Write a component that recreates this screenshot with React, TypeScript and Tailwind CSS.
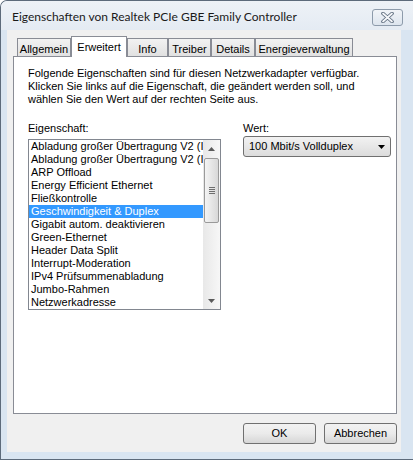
const tabs = [
  { label: "Allgemein", w: "w-[54px]" },
  { label: "Erweitert", w: "w-[56px]", active: true },
  { label: "Info", w: "w-[41px]" },
  { label: "Treiber", w: "w-[43px]" },
  { label: "Details", w: "w-[44px]" },
  { label: "Energieverwaltung", w: "w-[98px]" },
];

const items = [
  "Abladung großer Übertragung V2 (IPv4)",
  "Abladung großer Übertragung V2 (IPv6)",
  "ARP Offload",
  "Energy Efficient Ethernet",
  "Fließkontrolle",
  "Geschwindigkeit & Duplex",
  "Gigabit autom. deaktivieren",
  "Green-Ethernet",
  "Header Data Split",
  "Interrupt-Moderation",
  "IPv4 Prüfsummenabladung",
  "Jumbo-Rahmen",
  "Netzwerkadresse",
];

const selected = "Geschwindigkeit & Duplex";

function Arrow({ up }: { up?: boolean }) {
  return (
    <svg width="7" height="4" viewBox="0 0 7 4">
      <path d={up ? "M0 4 L3.5 0 L7 4 Z" : "M0 0 L7 0 L3.5 4 Z"} fill="#5a5a5a" />
    </svg>
  );
}

function Scrollbar() {
  return (
    <div className="w-[17px] flex flex-col bg-gradient-to-r from-[#e8e8e8] to-[#f7f7f7]">
      <div className="h-[17px] flex items-center justify-center">
        <Arrow up />
      </div>
      <div className="mx-[1px] mt-[1px] h-[65px] rounded-[2px] border border-[#9a9a9a] bg-gradient-to-r from-[#f4f4f4] via-[#e6e6e6] to-[#d8d8d8] flex flex-col items-center justify-center gap-[1px]">
        <div className="w-[6px] h-px bg-[#6e6e6e]" />
        <div className="w-[6px] h-px bg-[#6e6e6e]" />
        <div className="w-[6px] h-px bg-[#6e6e6e]" />
        <div className="w-[6px] h-px bg-[#6e6e6e]" />
      </div>
      <div className="flex-1" />
      <div className="h-[17px] flex items-center justify-center">
        <Arrow />
      </div>
    </div>
  );
}

export default function App() {
  return (
    <div
      className="w-[413px] h-[460px] bg-[#d9e5f1] rounded-tl-[7px] border-l border-t border-b border-[#5d6b7b] flex flex-col overflow-hidden text-[11px] text-black"
      style={{ fontFamily: '"Liberation Sans", Arial, sans-serif' }}
    >
      {/* Title bar */}
      <div className="h-[29px] flex justify-between bg-gradient-to-b from-[#eef2f7] to-[#e4ebf3]">
        <div
          className="pl-[11px] pt-[7px] text-[12px] text-[#1a1a1a]"
          style={{ fontFamily: 'Lato, "Noto Sans", sans-serif' }}
        >
          Eigenschaften von Realtek PCIe GBE Family Controller
        </div>
        <div className="mt-[8px] mr-[10px] w-[31px] h-[17px] rounded-[3px] border border-[#8d9bab] bg-gradient-to-b from-[#f1f4f8] to-[#dde5ee] flex items-center justify-center">
          <svg width="13" height="11" viewBox="0 0 13 11">
            <path d="M2 1.5 L11 9.5 M11 1.5 L2 9.5" stroke="#5b6a7c" strokeWidth="3.6" strokeLinecap="round" />
            <path d="M2 1.5 L11 9.5 M11 1.5 L2 9.5" stroke="#f4f6f9" strokeWidth="1.8" strokeLinecap="round" />
          </svg>
        </div>
      </div>

      {/* Client area */}
      <div className="ml-[6px] w-[394px] h-[422px] bg-[#f0f0f0] flex flex-col pl-[6px] pt-[6px]">
        {/* Tabs */}
        <div className="ml-[4px] h-[20px] flex items-end">
          {tabs.map((t) =>
            t.active ? (
              <div
                key={t.label}
                className={`${t.w} h-[21px] -mb-px relative z-10 bg-white border border-b-0 border-[#898c95] flex items-start justify-center pt-[2px]`}
              >
                {t.label}
              </div>
            ) : (
              <div
                key={t.label}
                className={`${t.w} h-[18px] bg-gradient-to-b from-[#f2f2f2] to-[#e1e1e1] border border-b-0 border-[#898c95] flex items-start justify-center pt-[2px]`}
              >
                {t.label}
              </div>
            )
          )}
        </div>

        {/* Panel */}
        <div className="w-[384px] h-[358px] bg-white border border-[#898c95] pl-[14px] pt-[10px]">
          <p className="leading-[13px]">
            Folgende Eigenschaften sind für diesen Netzwerkadapter verfügbar.
            <br />
            Klicken Sie links auf die Eigenschaft, die geändert werden soll, und
            <br />
            wählen Sie den Wert auf der rechten Seite aus.
          </p>

          <div className="mt-[16px] flex gap-[22px]">
            <div className="w-[193px]">
              <div className="leading-[13px]">Eigenschaft:</div>
              <div className="mt-[4px] h-[171px] border border-[#828790] flex">
                <div className="flex-1 overflow-hidden">
                  {items.map((it) => (
                    <div
                      key={it}
                      className={`h-[13px] leading-[13px] pl-[2px] whitespace-nowrap ${
                        it === selected ? "bg-[#3399ff] text-white" : ""
                      }`}
                    >
                      {it}
                    </div>
                  ))}
                </div>
                <Scrollbar />
              </div>
            </div>

            <div className="w-[148px]">
              <div className="leading-[13px]">Wert:</div>
              <div className="mt-[1px] h-[21px] rounded-[3px] border border-[#707070] bg-gradient-to-b from-[#f2f2f2] to-[#dcdcdc] flex items-center justify-between pl-[5px] pr-[5px]">
                <span>100 Mbit/s Vollduplex</span>
                <svg width="7" height="4" viewBox="0 0 7 4">
                  <path d="M0 0 L7 0 L3.5 4 Z" fill="#000" />
                </svg>
              </div>
            </div>
          </div>
        </div>

        {/* Buttons */}
        <div className="w-[384px] mt-[9px] flex justify-end gap-[8px]">
          {["OK", "Abbrechen"].map((b) => (
            <button
              key={b}
              className="w-[73px] h-[21px] rounded-[3px] border border-[#707070] bg-gradient-to-b from-[#f2f2f2] via-[#ebebeb] to-[#d6d6d6] flex items-center justify-center"
            >
              {b}
            </button>
          ))}
        </div>
      </div>
    </div>
  );
}
